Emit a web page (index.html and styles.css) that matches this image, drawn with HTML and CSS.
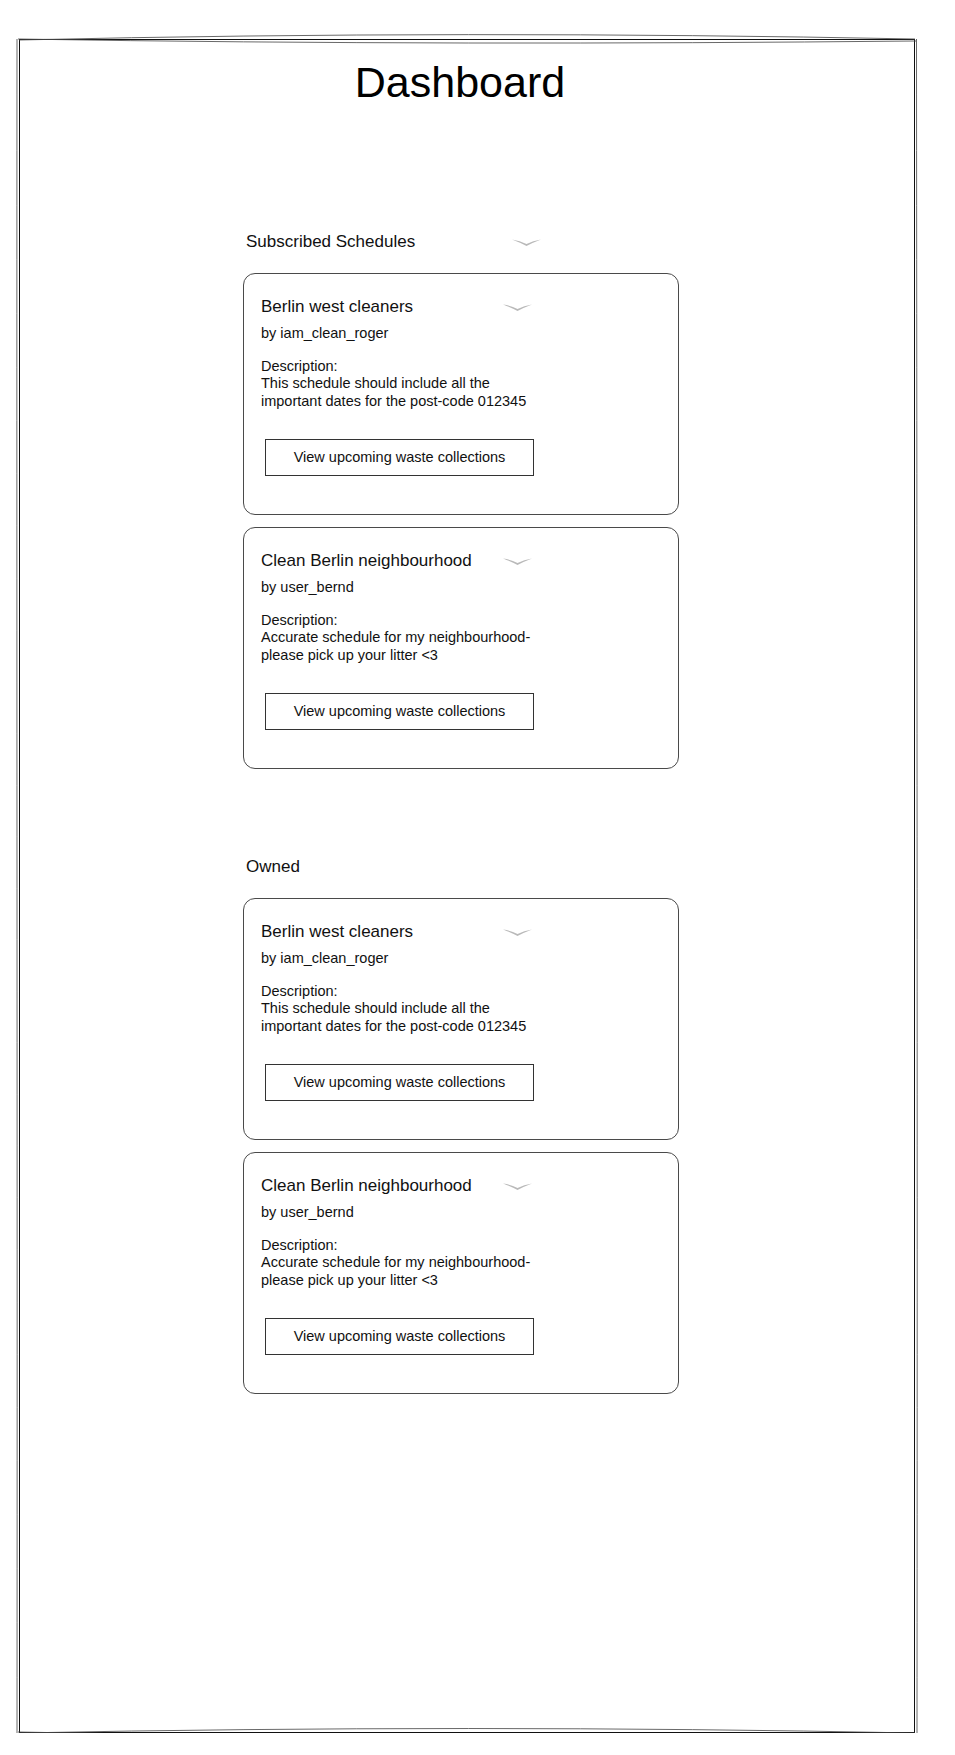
FILE: index.html
```html
<!DOCTYPE html>
<html lang="en">
<head>
  <meta charset="UTF-8">
  <meta name="viewport" content="width=device-width, initial-scale=1.0">
  <title>Dashboard</title>
  <link rel="stylesheet" href="styles.css">
</head>
<body>
  <div class="frame">
    <svg class="frame-sketch" width="896" height="1694" viewBox="0 0 896 1694">
      <path d="M0 1 C300 -6, 600 -6, 896 0" />
      <path d="M-1 0 C300 5, 600 5, 897 2" />
      <path d="M0 1694 C300 1688, 600 1688, 896 1694" />
      <path d="M-1 1693 C300 1699, 600 1699, 897 1695" />
      <path d="M-2 0 C-2.5 600, -1.5 1100, -2 1694" />
      <path d="M897.5 0 C898 600, 898.5 1100, 898 1694" />
    </svg>

    <h1 class="page-title">Dashboard</h1>

    <div class="column">
      <section class="section">
        <div class="section-header">
          <span class="section-label">Subscribed Schedules</span>
          <svg class="chevron" width="29" height="7" viewBox="0 0 29 7"><path d="M0 0.5 Q8 1.5 14.5 5 Q21 1.5 29 0.5 Q21 3.5 14.5 7 Q8 3.5 0 0.5 Z" /></svg>
        </div>

        <div class="cards">
          <div class="card">
            <div class="card-head">
              <span class="card-title">Berlin west cleaners</span>
              <svg class="chevron" width="29" height="7" viewBox="0 0 29 7"><path d="M0 0.5 Q8 1.5 14.5 5 Q21 1.5 29 0.5 Q21 3.5 14.5 7 Q8 3.5 0 0.5 Z" /></svg>
            </div>
            <div class="card-author">by iam_clean_roger</div>
            <div class="card-desc">
              Description:<br>
              This schedule should include all the<br>
              important dates for the post-code 012345
            </div>
            <button class="btn">View upcoming waste collections</button>
          </div>

          <div class="card">
            <div class="card-head">
              <span class="card-title">Clean Berlin neighbourhood</span>
              <svg class="chevron" width="29" height="7" viewBox="0 0 29 7"><path d="M0 0.5 Q8 1.5 14.5 5 Q21 1.5 29 0.5 Q21 3.5 14.5 7 Q8 3.5 0 0.5 Z" /></svg>
            </div>
            <div class="card-author">by user_bernd</div>
            <div class="card-desc">
              Description:<br>
              Accurate schedule for my neighbourhood-<br>
              please pick up your litter &lt;3
            </div>
            <button class="btn">View upcoming waste collections</button>
          </div>
        </div>
      </section>

      <section class="section section-owned">
        <div class="section-header">
          <span class="section-label">Owned</span>
        </div>

        <div class="cards">
          <div class="card">
            <div class="card-head">
              <span class="card-title">Berlin west cleaners</span>
              <svg class="chevron" width="29" height="7" viewBox="0 0 29 7"><path d="M0 0.5 Q8 1.5 14.5 5 Q21 1.5 29 0.5 Q21 3.5 14.5 7 Q8 3.5 0 0.5 Z" /></svg>
            </div>
            <div class="card-author">by iam_clean_roger</div>
            <div class="card-desc">
              Description:<br>
              This schedule should include all the<br>
              important dates for the post-code 012345
            </div>
            <button class="btn">View upcoming waste collections</button>
          </div>

          <div class="card">
            <div class="card-head">
              <span class="card-title">Clean Berlin neighbourhood</span>
              <svg class="chevron" width="29" height="7" viewBox="0 0 29 7"><path d="M0 0.5 Q8 1.5 14.5 5 Q21 1.5 29 0.5 Q21 3.5 14.5 7 Q8 3.5 0 0.5 Z" /></svg>
            </div>
            <div class="card-author">by user_bernd</div>
            <div class="card-desc">
              Description:<br>
              Accurate schedule for my neighbourhood-<br>
              please pick up your litter &lt;3
            </div>
            <button class="btn">View upcoming waste collections</button>
          </div>
        </div>
      </section>
    </div>
  </div>
</body>
</html>
```

FILE: styles.css
```css
body {
  font-family: "Liberation Sans", Arial, Helvetica, sans-serif;
  margin: 0;
  padding: 0;
  background-color: #fff;
  color: #000;
}

.frame {
  position: relative;
  box-sizing: border-box;
  width: 896px;
  height: 1694px;
  margin: 39px 0 0 19px;
  padding-top: 19px;
  border: 1px solid #111;
}

.frame-sketch {
  position: absolute;
  left: -1px;
  top: -1px;
  overflow: visible;
  pointer-events: none;
}

.frame-sketch path {
  fill: none;
  stroke: #444;
  stroke-width: 1;
  opacity: 0.8;
}

.page-title {
  margin: 0;
  padding-right: 14px;
  font-size: 43px;
  font-weight: normal;
  line-height: 47px;
  text-align: center;
}

.column {
  width: 436px;
  margin: 126px 0 0 223px;
}

.section-owned {
  margin-top: 88px;
}

.section-header {
  display: grid;
  grid-template-columns: 266px 29px;
  align-items: center;
  padding-left: 3px;
  height: 20px;
}

.section-label {
  font-size: 17px;
  line-height: 20px;
  color: #111;
}

.chevron {
  display: block;
}

.chevron path {
  fill: #b9b9b9;
}

.cards {
  display: flex;
  flex-direction: column;
  gap: 12px;
  margin-top: 21px;
}

.card {
  box-sizing: border-box;
  height: 242px;
  padding: 23px 17px 0 17px;
  border: 1px solid #4a4a4a;
  border-radius: 12px;
}

.card-head {
  display: grid;
  grid-template-columns: 242px 29px;
  align-items: center;
  height: 20px;
}

.card-title {
  font-size: 17px;
  line-height: 20px;
  color: #111;
  white-space: nowrap;
}

.card-author {
  margin-top: 8px;
  font-size: 14.5px;
  line-height: 17.5px;
  color: #111;
}

.card-desc {
  margin-top: 15px;
  font-size: 14.5px;
  line-height: 17.8px;
  color: #111;
}

.btn {
  display: block;
  box-sizing: border-box;
  width: 269px;
  height: 37px;
  margin: 28px 0 0 4px;
  padding: 0;
  border: 1px solid #333;
  background-color: #fff;
  font-family: inherit;
  font-size: 14.5px;
  color: #111;
  cursor: pointer;
}
```
